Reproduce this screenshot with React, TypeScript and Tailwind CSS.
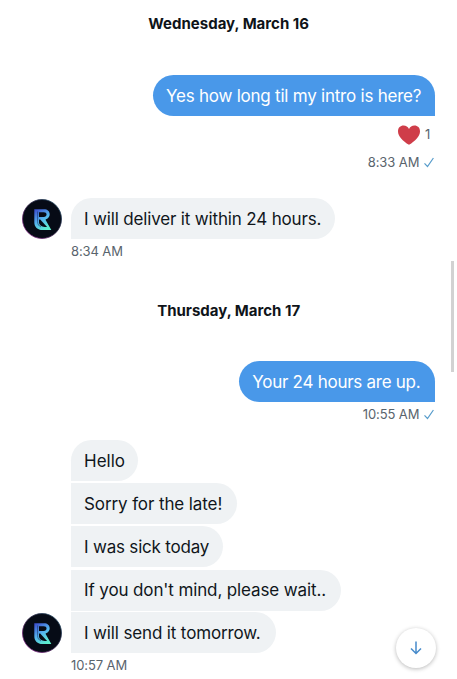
import clsx from "clsx";

interface BubbleProps {
  text: string;
  mine?: boolean;
  grouped?: boolean;
  className?: string;
}

function Avatar() {
  return (
    <svg viewBox="0 0 40 40" className="w-10 h-10 shrink-0" aria-hidden="true">
      <defs>
        <linearGradient id="ring" x1="0" y1="1" x2="1" y2="0">
          <stop offset="0" stopColor="#a02a9c" />
          <stop offset="0.5" stopColor="#302145" />
          <stop offset="1" stopColor="#195064" />
        </linearGradient>
        <linearGradient id="mark" x1="13" y1="11" x2="26" y2="30" gradientUnits="userSpaceOnUse">
          <stop offset="0" stopColor="#3d50cf" />
          <stop offset="0.5" stopColor="#55b5ef" />
          <stop offset="1" stopColor="#5cf0cb" />
        </linearGradient>
      </defs>
      <circle cx="20" cy="20" r="19.5" fill="#060b16" stroke="url(#ring)" strokeWidth="0.8" />
      <path
        d="M12.3 10.2H22c3.4 0 5.7 2 5.7 5.1 0 2.4-1.4 4.2-3.6 4.9l-.6.5 5.8 10.4h-8.8c-4.9 0-8.2-3-8.2-7.8Z"
        fill="url(#mark)"
      />
      <path d="M17 13.2h4.8c1.6 0 2.7.8 2.7 2.3s-1.1 2.4-2.7 2.4H17Z" fill="#060b16" />
      <path d="M15.6 12.5v10.2c0 2.5 1.3 4.4 3.4 5.2" fill="none" stroke="#152a66" strokeWidth="0.6" />
      <path d="M17 20.6h1.2l6.9 7.3h-2.3c-3.5 0-5.8-1.9-5.8-5.1Z" fill="#060b16" />
    </svg>
  );
}

function Bubble({ text, mine, grouped, className }: BubbleProps) {
  return (
    <div
      className={clsx(
        "h-[41px] shrink-0 px-[13px] pt-0.5 flex items-center whitespace-nowrap text-[17px]",
        mine
          ? "bg-[#4998e9] text-white rounded-[21px] rounded-br-none"
          : "bg-[#eff2f4] text-[#10161b] rounded-r-[21px]",
        !mine && !grouped && "rounded-tl-[21px]",
        className
      )}
    >
      {text}
    </div>
  );
}

function SentTime({ time }: { time: string }) {
  return (
    <div className="flex items-center justify-end gap-[5px] h-5 pr-px text-[13px] text-[#59646d]">
      <span className="tracking-[-0.1px]">{time}</span>
      <svg viewBox="0 0 10 11" className="w-[10px] h-[11px] -mt-px" fill="none" stroke="#579ccb" strokeWidth="1.2">
        <path d="M.5 6.4 3.5 9.5 9.4 1" />
      </svg>
    </div>
  );
}

const lateMessages = [
  { text: "Hello", className: "w-[67px]" },
  { text: "Sorry for the late!", className: "w-[166px] tracking-[-0.1px]" },
  { text: "I was sick today", className: "w-[152px] tracking-[-0.2px]" },
  { text: "If you don't mind, please wait..", className: "w-[270px] tracking-[-0.12px]" },
];

export default function App() {
  return (
    <main className="relative w-[457px] h-[679px] overflow-hidden bg-white pl-[22px] pr-[21.7px] font-['Inter',sans-serif]">
      <h2 className="h-6 mt-3 text-center text-[15px] leading-6 font-bold text-[#0f1419]">Wednesday, March 16</h2>

      <section className="mt-[39px] flex flex-col items-end">
        <Bubble mine text="Yes how long til my intro is here?" className="w-[282.3px] tracking-[-0.23px]" />
        <div className="flex items-center h-[37px] gap-[5px] pr-[5px] text-[13px] text-[#59646d]">
          <svg viewBox="0 0 22 20" className="w-[22px] h-5" fill="#cf3d49">
            <path d="M11 19.8C4.8 16 0 11.4 0 6.2 0 2.7 2.4.5 5.5.5 8.1.5 10 2 11 4c1-2 2.9-3.5 5.5-3.5C19.6.5 22 2.7 22 6.2c0 5.2-4.8 9.8-11 13.6Z" />
          </svg>
          <span>1</span>
        </div>
        <SentTime time="8:33 AM" />
      </section>

      <section className="mt-[25px]">
        <div className="flex items-end gap-[9px]">
          <Avatar />
          <Bubble text="I will deliver it within 24 hours." className="w-[264px] tracking-[-0.16px]" />
        </div>
        <p className="pl-[49px] h-6 text-[13px] leading-6 tracking-[-0.1px] text-[#59646d]">8:34 AM</p>
      </section>

      <h2 className="h-6 mt-[35px] pt-px text-center text-[15px] leading-6 font-bold text-[#0f1419]">Thursday, March 17</h2>

      <section className="mt-[39px] flex flex-col items-end">
        <Bubble mine text="Your 24 hours are up." className="w-[196px] tracking-[-0.27px]" />
        <div className="mt-[3px]"><SentTime time="10:55 AM" /></div>
      </section>

      <section className="mt-[15px]">
        <div className="ml-[49px] flex flex-col items-start gap-[2.2px]">
          {lateMessages.map((message, i) => (
            <Bubble key={message.text} text={message.text} grouped={i > 0} className={message.className} />
          ))}
        </div>
        <div className="mt-[1.6px] flex items-end gap-[9px]">
          <Avatar />
          <Bubble grouped text="I will send it tomorrow." className="w-[205px] tracking-[-0.14px]" />
        </div>
        <p className="pl-[49px] h-6 text-[13px] leading-6 tracking-[-0.1px] text-[#59646d]">10:57 AM</p>
      </section>

      <div className="absolute right-[3px] top-[261px] w-[3px] h-[111px] bg-[#d2d2d2]" />
      <button
        aria-label="Scroll to latest message"
        className="absolute left-[395.5px] top-[628px] size-10 rounded-full bg-white flex items-center justify-center shadow-[0_1px_4px_rgba(0,0,0,0.28)]"
      >
        <svg viewBox="0 0 12 14" className="w-3 h-[14px]" fill="none" stroke="#478bcb" strokeWidth="1.5">
          <path d="M6 .5v12M1 7.5l5 5 5-5" />
        </svg>
      </button>
    </main>
  );
}
